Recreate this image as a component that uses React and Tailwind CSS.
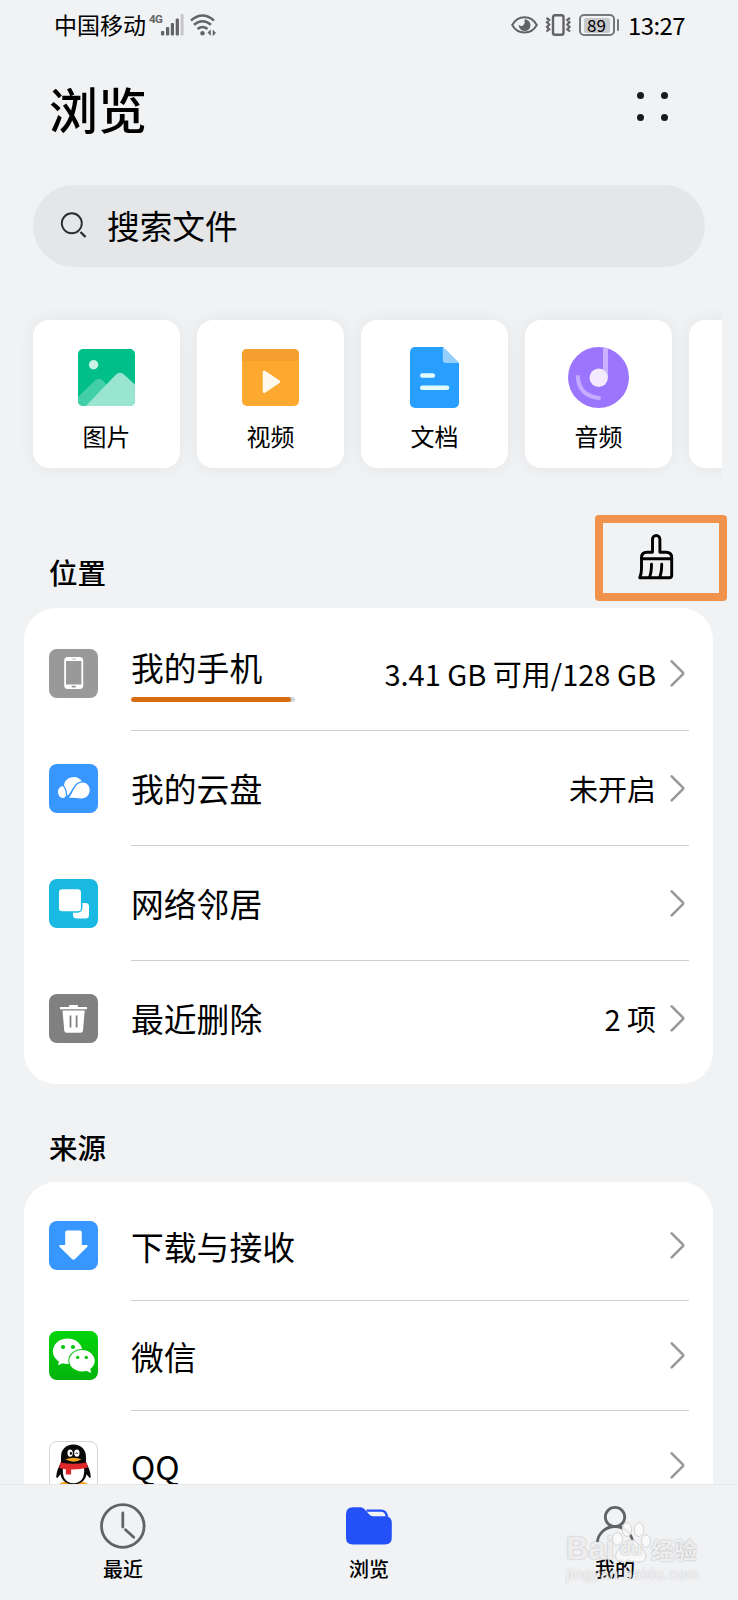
import { clsx } from 'clsx'

const categories = [
  { label: '图片', icon: ImageIcon },
  { label: '视频', icon: VideoIcon },
  { label: '文档', icon: DocIcon },
  { label: '音频', icon: AudioIcon },
]

const locations = [
  { label: '我的手机', icon: PhoneIcon, value: '3.41 GB 可用/128 GB', usage: 97.5 },
  { label: '我的云盘', icon: CloudIcon, value: '未开启' },
  { label: '网络邻居', icon: NetworkIcon },
  { label: '最近删除', icon: TrashIcon, value: '2 项' },
]

const sources = [
  { label: '下载与接收', icon: DownloadIcon },
  { label: '微信', icon: WechatIcon },
  { label: 'QQ', icon: QQIcon },
]

const tabs = [
  { label: '最近', icon: ClockIcon },
  { label: '浏览', icon: FolderIcon },
  { label: '我的', icon: PersonIcon },
]

/* ---------- category icons ---------- */

function ImageIcon() {
  return (
    <svg width="62" height="62" viewBox="0 0 62 62">
      <clipPath id="pic">
        <rect x="2" y="2" width="57" height="57" rx="5" />
      </clipPath>
      <g clipPath="url(#pic)">
        <rect width="62" height="62" fill="#02bf8a" />
        <path d="M0 52L19 33.500q4-3.500 7.500 0L46 53v9H0z" fill="#42cfa7" />
        <path d="M7 62L40 27.500q4-3.500 8 0L62 40.500V62z" fill="#9ae5d0" />
        <circle cx="17.600" cy="17.700" r="4.700" fill="#c9f3e6" />
      </g>
    </svg>
  )
}

function VideoIcon() {
  return (
    <svg width="62" height="62" viewBox="0 0 62 62">
      <rect x="2" y="2" width="57" height="57" rx="5" fill="#fda92f" />
      <path d="M2 14V7a5 5 0 0 1 5-5h47a5 5 0 0 1 5 5v7z" fill="#f59f30" />
      <path d="M24.200 25v19.500L38.700 34.700z" fill="#fff8ec" stroke="#fff8ec" strokeWidth="3" strokeLinejoin="round" />
    </svg>
  )
}

function DocIcon() {
  return (
    <svg width="62" height="62" viewBox="0 0 62 62">
      <path d="M11 0H38.800L55 16v40a5 5 0 0 1-5 5H11a5 5 0 0 1-5-5V5a5 5 0 0 1 5-5z" fill="#289fff" />
      <path d="M38.800 0L55 16H41.800a3 3 0 0 1-3-3z" fill="#94cffe" />
      <path d="M18.300 28.500h10.500M18.300 40.700h24.700" stroke="#e2fbff" strokeWidth="4.600" strokeLinecap="round" />
    </svg>
  )
}

function AudioIcon() {
  return (
    <svg width="62" height="62" viewBox="0 0 62 62">
      <circle cx="30.500" cy="30.500" r="30.500" fill="#9c75ff" />
      <path d="M35 .3q2.500 .2 5 1.200V30.500h-5z" fill="#c9b1ff" />
      <path d="M9.800 30q1.500 19 21.200 21" fill="none" stroke="#c4acff" strokeWidth="4" strokeLinecap="round" />
      <circle cx="30.700" cy="30.700" r="9.200" fill="#f3ebfd" />
    </svg>
  )
}

/* ---------- list icons ---------- */

function Tile({ className, children }) {
  return (
    <svg width="49" height="49" viewBox="0 0 49 49" className={clsx('mb-px shrink-0 rounded-lg', className)}>
      {children}
    </svg>
  )
}

function PhoneIcon() {
  return (
    <Tile className="bg-[#999999]">
      <rect x="15.200" y="8" width="19" height="32" rx="3.500" fill="#fff" />
      <rect x="17" y="12" width="15.400" height="23.500" fill="#999" />
      <path d="M22.500 10h4.500" stroke="#bbb" />
      <rect x="22.500" y="36.700" width="4.500" height="1.800" rx=".8" fill="#999" />
    </Tile>
  )
}

function CloudIcon() {
  return (
    <Tile className="bg-[#3797ff]">
      <path d="M15 21.500C15.500 16.500 19.500 13 25 13c3.500 0 6.200 1.700 7.700 4.200-5 .7-7.300 4.300-9.400 7.800-2 3.300-3.300 6-5 6.800 0-3.500-1-7.500-3.300-10.300z" fill="#fff" />
      <path d="M13.800 22c2.300 2.600 3 5.500 3.200 9.500-.7 1.800-2.200 2.700-3.500 2.500-2.500-.3-4.500-3-4.500-6.200 0-3 2.100-5.400 4.800-5.800z" fill="#fff" />
      <path d="M20 33.800c4-4.600 5.500-14.900 13.400-15.200 4.400 0 7.300 3.500 7.300 7.500 0 4.600-3.300 8.300-8.200 8.300-4.500 0-9-.8-12.500-.6z" fill="#fff" />
    </Tile>
  )
}

function NetworkIcon() {
  return (
    <Tile className="bg-[#19b9e2]">
      <rect x="24" y="24" width="16" height="15.500" rx="3.500" fill="#fff" />
      <rect x="9.200" y="9.500" width="23.500" height="23.500" rx="4" fill="#fff" stroke="#19b9e2" strokeWidth="1.500" />
    </Tile>
  )
}

function TrashIcon() {
  return (
    <Tile className="bg-[#808080]">
      <path d="M11 13h9v-.7q0-1.300 1.500-1.300h6q1.500 0 1.500 1.300v.7h9v2.300H11z" fill="#fff" />
      <path d="M13.500 16.500h22.200L34 36.500q-.2 2.200-2.400 2.200H17.700q-2.200 0-2.400-2.200z" fill="#fff" />
      <path d="M21.500 21.500v12M27.600 21.500v12" stroke="#808080" strokeWidth="1.800" />
    </Tile>
  )
}

function DownloadIcon() {
  return (
    <Tile className="bg-[#3797ff]">
      <path d="M18 9.500h13q1.800 0 1.800 1.800V24h5q1.800.4.500 1.800L26 38q-1.500 1.300-3 0L10.500 25.800q-1.200-1.400.5-1.800h5.200V11.300q0-1.800 1.800-1.800z" fill="#fff" />
    </Tile>
  )
}

function WechatIcon() {
  return (
    <Tile className="bg-linear-to-b from-[#04d40b] to-[#04b40d]">
      <ellipse cx="18.600" cy="20.300" rx="14.700" ry="12.700" fill="#fff" />
      <path d="M10.500 28.500L9 34.300l7-3z" fill="#fff" />
      <ellipse cx="33" cy="29.800" rx="13.700" ry="11.700" fill="#04c40c" />
      <ellipse cx="33" cy="29.800" rx="12.700" ry="10.700" fill="#fff" />
      <path d="M41 36l1 6-6.500-3z" fill="#fff" />
      <circle cx="14" cy="16" r="2.100" fill="#04c40c" />
      <circle cx="24" cy="16" r="2.100" fill="#04c40c" />
      <circle cx="28.700" cy="26.400" r="1.700" fill="#04c40c" />
      <circle cx="37.300" cy="26.400" r="1.700" fill="#04c40c" />
    </Tile>
  )
}

function QQIcon() {
  return (
    <Tile className="border border-gray-300 bg-white">
      <ellipse cx="17" cy="44.500" rx="7.500" ry="3" fill="#f5a61d" />
      <ellipse cx="32" cy="44.500" rx="7.500" ry="3" fill="#f5a61d" />
      <path d="M24.500 2.500C16.500 2.500 11.500 8 11.500 15v6C9 26 6.500 31 6.500 36.500q.8 2 2 0l2.500-3C12 40 17 44 24.500 44S37 40 38 33.500l2.500 3q1.200 2 2 0C42.500 31 40 26 37.500 21v-6c0-7-5-12.500-13-12.500z" fill="#080808" />
      <path d="M13.500 27q-1.500 15 11 16 12.500-1 11-16z" fill="#fff" />
      <ellipse cx="21" cy="11.500" rx="2.800" ry="3.800" fill="#fff" />
      <ellipse cx="28" cy="11.500" rx="2.800" ry="3.800" fill="#fff" />
      <ellipse cx="21.800" cy="11.800" rx="1.100" ry="1.700" fill="#080808" />
      <path d="M26.900 12.300q.8-2.500 2 0" fill="none" stroke="#080808" />
      <path d="M16 18q8.500-3.200 17 0-8.500 5-17 0z" fill="#f5a61d" />
      <path d="M10.800 21.300q13.700 2.500 27.400 0l1.300 5.200q-8 2.500-17.500 2.200v5.300h-5.500V28.300q-4-.3-7-1.300z" fill="#e0282c" />
    </Tile>
  )
}

/* ---------- tab icons ---------- */

function ClockIcon() {
  return (
    <svg width="46" height="46" viewBox="0 0 46 46" fill="none" stroke="#626365" strokeWidth="2.800">
      <circle cx="22.800" cy="23" r="21.300" />
      <path d="M22.800 10v14M25.500 26.700l8.200 7.500" strokeLinecap="round" strokeWidth="2.800" />
    </svg>
  )
}

function FolderIcon() {
  return (
    <svg width="46" height="46" viewBox="0 0 46 46" fill="none">
      <path d="M7 4.300h7.500q2.200 0 3.600 1.500l5.500 6q1.200 1.400 3 1.400h14q5.200 1 5.200 6.500v14.800q0 7-7 7H7q-7 0-7-7V11.300q0-7 7-7z" fill="#2450f8" />
      <path d="M20.500 7.600h14.700q4.800 0 5.800 6.200" stroke="#2450f8" strokeWidth="2.400" />
    </svg>
  )
}

function PersonIcon() {
  return (
    <svg width="46" height="46" viewBox="0 0 46 46" fill="none" stroke="#626365" strokeWidth="2.800">
      <circle cx="23" cy="14" r="9.700" />
      <path d="M5.300 42v-1.500a17.700 17 0 0 1 35.400 0V42" />
    </svg>
  )
}

/* ---------- misc icons ---------- */

function Chevron() {
  return (
    <svg width="16" height="28" viewBox="0 0 16 28" className="mb-px shrink-0" fill="none" stroke="#999" strokeWidth="2.600" strokeLinecap="round">
      <path d="M2.700 2.300l11 11q1 1 0 2l-11 11" />
    </svg>
  )
}

function BroomIcon() {
  return (
    <svg width="38" height="46" viewBox="0 0 38 46" fill="none" stroke="#000" strokeWidth="2.900" strokeLinecap="round" strokeLinejoin="round">
      <path d="M14.500 18.200V5.200a3.700 3.700 0 0 1 7.400 0v13h6.200q5.600 0 5.600 5.600v17.500q0 2.500-2.500 2.500H1.700q1.800-4 1.800-9V23.800q0-5.600 5.600-5.600z" />
      <path d="M3.500 24.800h30.200" />
      <path d="M13.500 30.300q0 8-2 13M23.700 30.300q0 8-2 13" />
    </svg>
  )
}

function SignalIcon() {
  return (
    <svg width="24" height="22" viewBox="0 0 24 22" fill="#626365">
      <rect x="0" y="17" width="3.200" height="4.500" rx="1" />
      <rect x="5" y="13" width="3.200" height="8.500" rx="1" />
      <rect x="9.800" y="9" width="3.200" height="12.500" rx="1" />
      <rect x="14.700" y="4.500" width="3.200" height="17" rx="1" />
      <rect x="19.600" y="0" width="3" height="21.500" rx="1" fill="#c6c7c9" />
    </svg>
  )
}

function WifiIcon() {
  return (
    <svg width="27" height="22" viewBox="0 0 27 22" fill="none" stroke="#626365" strokeWidth="2.500">
      <path d="M1 6.500q11.500-10 23 0M4 10.800q8.500-7 17 0M7.500 15q5-4 10 0" />
      <circle cx="12.500" cy="19.300" r="2.200" fill="#626365" stroke="none" />
      <path d="M17.700 18.800l2.800-2.800v5.500M25.800 18.800L23 21.500V16" fill="#626365" strokeWidth=".6" />
    </svg>
  )
}

function EyeIcon() {
  return (
    <svg width="27" height="20" viewBox="0 0 27 20">
      <path d="M1.200 10C4 5 8.500 2.200 13.500 2.200S23 5 25.800 10C23 15 18.500 17.500 13.500 17.500S4 15 1.200 10z" fill="none" stroke="#626365" strokeWidth="2" />
      <path d="M13.500 4.200a5.900 5.900 0 1 1-5.800 5.500q3 2.300 4.800.3t1-5.800z" fill="#626365" />
    </svg>
  )
}

function VibrateIcon() {
  return (
    <svg width="27" height="22" viewBox="0 0 27 22" fill="none" stroke="#626365">
      <rect x="8" y="1.200" width="10.500" height="19.500" rx="2" strokeWidth="2.400" />
      <path d="M1.500 4l2.700 2-2.200 2.300 2.200 2.300L2 13l2.200 2.300-2.700 2.200M25 4l-2.700 2 2.200 2.300-2.200 2.300 2.200 2.400-2.200 2.300 2.700 2.200" strokeWidth="2.200" />
    </svg>
  )
}

function StatusBar() {
  return (
    <div className="flex h-[50px] items-center pl-[54px] pr-[53px]">
      <span className="mb-0.5 text-[23px] leading-none">中国移动</span>
      <span className="mb-2.5 ml-[3px] w-3 font-['Roboto','Noto_Sans_CJK_SC',sans-serif] text-[11.500px] font-bold leading-none tracking-[-0.500px] text-[#626365]">4G</span>
      <SignalIcon />
      <span className="-mt-px ml-[5px]">
        <WifiIcon />
      </span>
      <div className="ml-auto flex items-center">
        <EyeIcon />
        <span className="ml-[7px]">
          <VibrateIcon />
        </span>
        <div className="ml-[7px] flex h-[22px] w-9 items-center justify-center rounded-[5px] border-2 border-[#77787a]">
          <span className="flex h-[15px] w-[26px] items-center justify-center rounded-xs bg-[#c8c9cb] pb-0.5 text-[17px] leading-none">89</span>
        </div>
        <span className="ml-0.5 h-3 w-[2.500px] rounded-full bg-[#77787a]" />
        <span className="mb-px ml-[9px] text-[24px] leading-none tracking-[-0.600px]">13:27</span>
      </div>
    </div>
  )
}

function CategoryCard({ item }) {
  const Icon = item.icon
  return (
    <div className="flex h-[148px] w-[147px] shrink-0 flex-col items-center rounded-2xl bg-white pt-[27px] shadow-[0_0_18px_rgba(0,0,0,0.06)]">
      <Icon />
      <span className="mt-[15px] text-[24px] leading-6">{item.label}</span>
    </div>
  )
}

function ListRow({ item, last, className }) {
  const Icon = item.icon
  return (
    <div className={clsx('flex items-center pl-[25px]', className)}>
      <Icon />
      <div
        className={clsx(
          'ml-[33px] mr-6 flex h-full flex-1 items-center border-b pr-1',
          last ? 'border-transparent' : 'border-[#cfcfcf]',
        )}
      >
        <div className="flex-1">
          <div className="text-[32.800px] leading-10">{item.label}</div>
          {item.usage && (
            <div className="mb-[-2px] mt-2.5 h-[5px] w-[164px] overflow-hidden rounded-full bg-gray-300">
              <div className="h-full rounded-full bg-[#d96d12]" style={{ width: `${item.usage}%` }} />
            </div>
          )}
        </div>
        {item.value && <span className="mb-px mr-[13px] whitespace-nowrap text-[29px] leading-10">{item.value}</span>}
        <Chevron />
      </div>
    </div>
  )
}

function Watermark() {
  return (
    <div className="pointer-events-none absolute left-[566px] top-[1519px] font-['Liberation_Sans','Noto_Sans_CJK_SC',sans-serif] text-[#f8f8f9]/85">
      <div className="relative flex h-11 items-end [text-shadow:0_0_2px_#a9aaac]">
        <span className="w-[45px] text-[31px] font-bold leading-7">Bai</span>
        <svg width="40" height="42" viewBox="0 0 40 42" className="shrink-0" fill="#fafafb" fillOpacity=".9" stroke="#d2d3d5">
          <ellipse cx="6.500" cy="18" rx="5" ry="6.300" />
          <ellipse cx="16" cy="8.500" rx="4.700" ry="7" />
          <ellipse cx="28" cy="8.500" rx="4.700" ry="7" />
          <ellipse cx="35" cy="20" rx="4.500" ry="6.300" />
          <path d="M20 19c6 0 8 6 12 10 5 5 3 12-4 12-4 0-5-1-8-1s-5 1-9 1c-7 0-8-7-4-12 4-4 7-10 13-10z" />
        </svg>
        <span className="absolute left-[54px] top-[20px] text-[18px] font-bold leading-5">du</span>
        <span className="font-['Noto_Sans_CJK_SC',sans-serif] text-[23px] font-bold leading-7">经验</span>
      </div>
      <div className="mt-0.5 text-[15.500px] leading-[18px] tracking-[0.500px] [text-shadow:0_0_2px_#b9babc]">jingyan.baidu.com</div>
    </div>
  )
}

export default function App() {
  return (
    <div className="relative flex h-[1600px] w-[738px] flex-col overflow-hidden bg-[#f1f2f4] font-['Noto_Sans_CJK_SC',sans-serif] text-black">
      <div className="min-h-0 flex-1 overflow-hidden">
        <StatusBar />

        <header className="flex h-[120px] items-center justify-between pl-[49px] pr-[70px]">
          <h1 className="mb-1.5 text-[49px] font-medium leading-none">浏览</h1>
          <div className="mb-[7px] grid grid-cols-2 gap-x-[17px] gap-y-[15.500px]">
            {[0, 1, 2, 3].map((dot) => (
              <span key={dot} className="size-[7px] rounded-full bg-[#191a1c]" />
            ))}
          </div>
        </header>

        <div className="ml-[33px] mt-[15px] flex h-[82px] w-[672px] items-center rounded-full bg-[#e5e6e8] pl-7">
          <svg width="26" height="26" viewBox="0 0 26 26" fill="none" stroke="#2c2d2f" strokeWidth="1.900" className="overflow-visible">
            <circle cx="10.800" cy="10.300" r="10" />
            <path d="M19.500 19l5 5" strokeWidth="2.400" />
          </svg>
          <span className="mb-0.5 ml-5 text-[32.700px] leading-none">搜索文件</span>
        </div>

        <div className="mr-4 mt-[33px] flex gap-[17px] overflow-hidden py-5 pl-[33px]">
          {categories.map((item) => (
            <CategoryCard key={item.label} item={item} />
          ))}
          <div className="h-[148px] w-[147px] shrink-0 rounded-2xl bg-white shadow-[0_0_18px_rgba(0,0,0,0.06)]" />
        </div>

        <div className="flex h-[120px] items-start justify-between pl-[49px] pr-[11px]">
          <h2 className="mt-[70px] text-[28.500px] font-medium leading-7">位置</h2>
          <div className="mt-[27px] flex h-[86px] w-[132px] items-start justify-center rounded-sm border-8 border-[#f0924c] pr-2 pt-[11px]">
            <BroomIcon />
          </div>
        </div>
        <div className="ml-6 w-[689px] rounded-[32px] bg-white py-2">
          {locations.map((item, i) => (
            <ListRow key={item.label} item={item} last={i === locations.length - 1} className="h-[115px]" />
          ))}
        </div>

        <div className="h-[98px] pl-[49px] pt-[49px]">
          <h2 className="text-[28.500px] font-medium leading-7">来源</h2>
        </div>
        <div className="ml-6 w-[689px] rounded-t-[32px] bg-white pt-[9px]">
          {sources.map((item, i) => (
            <ListRow key={item.label} item={item} last={i === sources.length - 1} className="h-[110px]" />
          ))}
        </div>
      </div>

      <nav className="flex h-[116px] shrink-0 border-t border-[#e6e7e9] bg-[#f1f2f4]">
        {tabs.map(({ label, icon: Icon }) => (
          <div key={label} className="flex flex-1 flex-col items-center pt-[18px]">
            <Icon />
            <span className="mt-2.5 text-[20px] font-medium leading-5">{label}</span>
          </div>
        ))}
      </nav>

      <Watermark />
    </div>
  )
}
